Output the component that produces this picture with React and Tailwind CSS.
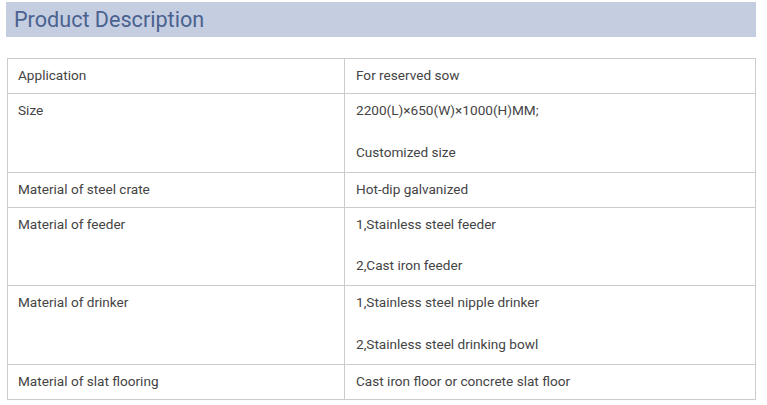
const rows = [
  { label: "Application", values: ["For reserved sow"] },
  { label: "Size", values: ["2200(L)×650(W)×1000(H)MM;", "Customized size"] },
  { label: "Material of steel crate", values: ["Hot-dip galvanized"] },
  { label: "Material of feeder", values: ["1,Stainless steel feeder", "2,Cast iron feeder"] },
  { label: "Material of drinker", values: ["1,Stainless steel nipple drinker", "2,Stainless steel drinking bowl"] },
  { label: "Material of slat flooring", values: ["Cast iron floor or concrete slat floor"] },
];

export default function App() {
  return (
    <div className="min-h-screen bg-white pt-[2px] px-[6px] font-['Roboto',sans-serif]">
      {/* Title bar */}
      <div className="w-[750px] h-[35px] bg-[#c5cde0] flex items-center pl-[8px]">
        <h2 className="text-[21.6px] leading-none text-[#4a6290] font-normal">Product Description</h2>
      </div>

      {/* Spec table */}
      <table className="mt-[21px] ml-[1px] w-[749px] border-collapse text-[13.6px] text-[#444]">
        <tbody>
          {rows.map((row) => (
            <tr key={row.label}>
              <td className="w-[337px] border border-[#cccccc] align-top pl-[10px] pt-[6px] pb-[8px] leading-[20px]">
                {row.label}
              </td>
              <td className="border border-[#cccccc] align-top pl-[11px] pt-[6px] pb-[8px] leading-[20px]">
                {row.values.map((v, i) => (
                  <p key={i} className={i > 0 ? "mt-[21.5px] mb-[2px]" : ""}>
                    {v}
                  </p>
                ))}
              </td>
            </tr>
          ))}
        </tbody>
      </table>
    </div>
  );
}
